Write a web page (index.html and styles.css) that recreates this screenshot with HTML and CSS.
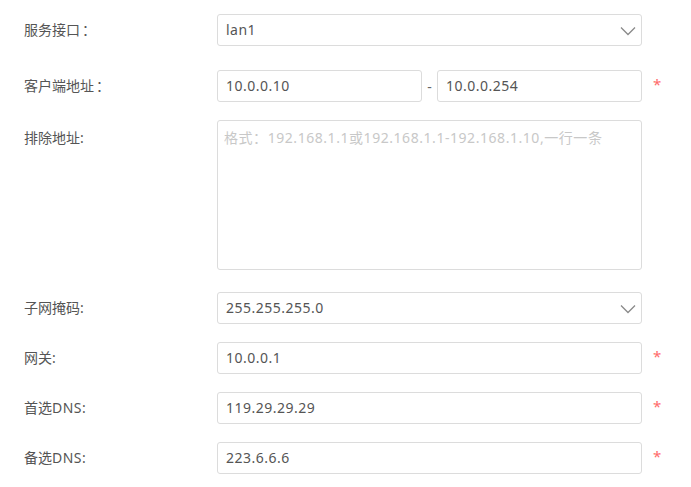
FILE: index.html
```html
<!DOCTYPE html>
<html>
<head>
<meta charset="utf-8">
<link rel="stylesheet" href="styles.css">
</head>
<body>
<form class="form">
  <div class="row row-first">
    <label class="label">服务接口<span class="fw">：</span></label>
    <div class="field">
      <div class="select"><span>lan1</span>
        <svg class="chev" width="16" height="10" viewBox="0 0 16 10"><path d="M1 1.5 L8 8.5 L15 1.5" fill="none" stroke="#8a8a8a" stroke-width="1.3"/></svg>
      </div>
    </div>
    <span class="req"></span>
  </div>
  <div class="row row-second">
    <label class="label">客户端地址<span class="fw">：</span></label>
    <div class="field range">
      <div class="input">10.0.0.10</div>
      <span class="dash">-</span>
      <div class="input">10.0.0.254</div>
    </div>
    <span class="req">*</span>
  </div>
  <div class="row row-top">
    <label class="label label-top">排除地址:</label>
    <div class="field">
      <div class="textarea"><span class="ph">格式：192.168.1.1或192.168.1.1-192.168.1.10,一行一条</span></div>
    </div>
    <span class="req"></span>
  </div>
  <div class="row">
    <label class="label">子网掩码:</label>
    <div class="field">
      <div class="select"><span>255.255.255.0</span>
        <svg class="chev" width="16" height="10" viewBox="0 0 16 10"><path d="M1 1.5 L8 8.5 L15 1.5" fill="none" stroke="#8a8a8a" stroke-width="1.3"/></svg>
      </div>
    </div>
    <span class="req"></span>
  </div>
  <div class="row">
    <label class="label">网关:</label>
    <div class="field"><div class="input">10.0.0.1</div></div>
    <span class="req">*</span>
  </div>
  <div class="row">
    <label class="label">首选<span class="lat">DNS:</span></label>
    <div class="field"><div class="input">119.29.29.29</div></div>
    <span class="req">*</span>
  </div>
  <div class="row">
    <label class="label">备选<span class="lat">DNS:</span></label>
    <div class="field"><div class="input">223.6.6.6</div></div>
    <span class="req">*</span>
  </div>
</form>
</body>
</html>
```
FILE: styles.css
```css
* { box-sizing: border-box; }
html, body { margin: 0; padding: 0; background: #fff; }
body {
  font-family: "Noto Sans", "Noto Sans CJK SC", sans-serif;
  font-size: 14px;
  color: #555;
}
.form {
  padding: 14px 0 0 24px;
  display: flex;
  flex-direction: column;
  gap: 18px;
}
.row {
  display: flex;
  align-items: center;
}
.row-first { margin-bottom: 6px; }
.row-top { align-items: flex-start; margin-bottom: 4px; }
.label {
  width: 193px;
  flex: none;
  color: #555;
  line-height: 20px;
}
.lat { letter-spacing: 0.5px; }
.fw { display: inline-block; width: 14px; text-align: center; margin-left: 2px; }
.label-top { padding-top: 8px; }
.field {
  width: 425px;
  flex: none;
}
.select, .input, .textarea {
  border: 1px solid #dcdcdc;
  border-radius: 3px;
  background: #fff;
  height: 32px;
  padding: 0 8px;
  display: flex;
  align-items: center;
  color: #555;
  line-height: 20px;
  letter-spacing: 0.5px;
}
.select { justify-content: space-between; padding-right: 5px; }
.chev { display: block; margin-top: 1px; }
.range { display: flex; align-items: center; }
.range .input { width: 205px; flex: none; }
.dash { width: 16px; text-align: center; color: #666; }
.textarea {
  height: 150px;
  align-items: flex-start;
  padding: 7px 6px;
}
.ph { color: #c8c8c8; letter-spacing: 0.55px; }
.req {
  margin-left: 11px;
  color: #ff6b6b;
  font-size: 15px;
  line-height: 20px;
  margin-top: -4px;
}
```
